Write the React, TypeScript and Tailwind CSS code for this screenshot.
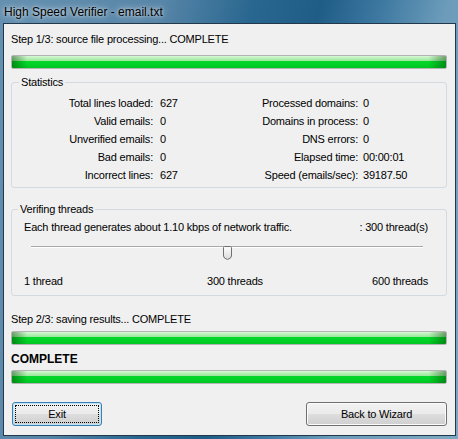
import React from "react";

const leftStats: [string, string][] = [
  ["Total lines loaded:", "627"],
  ["Valid emails:", "0"],
  ["Unverified emails:", "0"],
  ["Bad emails:", "0"],
  ["Incorrect lines:", "627"],
];

const rightStats: [string, string][] = [
  ["Processed domains:", "0"],
  ["Domains in process:", "0"],
  ["DNS errors:", "0"],
  ["Elapsed time:", "00:00:01"],
  ["Speed (emails/sec):", "39187.50"],
];

function ProgressBar({ className = "" }: { className?: string }) {
  return (
    <div
      className={
        "h-[14px] shrink-0 rounded-[2px] border border-[#b4b4b4] bg-[image:linear-gradient(to_right,rgba(0,60,0,0.45)_0%,rgba(0,60,0,0)_3.5%,rgba(0,60,0,0)_96%,rgba(0,60,0,0.45)_100%),linear-gradient(to_bottom,#d8f8d8_0%,#b6f0b6_20%,#9ee99f_38%,#05d62b_42%,#00d227_70%,#00c523_100%)] " +
        className
      }
    />
  );
}

function Thumb() {
  return (
    <svg width="9" height="14" viewBox="0 0 9 14" className="block">
      <defs>
        <linearGradient id="thumbGrad" x1="0" x2="0" y1="0" y2="1">
          <stop offset="0" stopColor="#fefefe" />
          <stop offset="1" stopColor="#dadada" />
        </linearGradient>
      </defs>
      <path
        d="M1.5 0.5 H7.5 A1 1 0 0 1 8.5 1.5 V10 Q8.5 12.3 4.5 13.5 Q0.5 12.3 0.5 10 V1.5 A1 1 0 0 1 1.5 0.5 Z"
        fill="url(#thumbGrad)"
        stroke="#707070"
      />
    </svg>
  );
}

export default function App() {
  return (
    <div className="w-[458px] h-[439px] flex flex-col bg-[linear-gradient(105deg,#6590b0_0%,#5886a8_28%,#2a6790_44%,#1f5c86_56%,#3c77a0_66%,#6c9cba_78%,#7ca8c2_100%)] font-['Liberation_Sans',Arial,sans-serif] text-black overflow-hidden">
      <div className="h-[23px] shrink-0 flex items-center pl-[4px] text-[12px] [text-shadow:0_0_7px_rgba(255,255,255,0.85),0_0_3px_rgba(255,255,255,0.6)]">
        High Speed Verifier - email.txt
      </div>
      <div className="h-[413px] ml-[3px] mr-[2px] border border-[#22394c] bg-[#f0f0f0] pl-[7px] pr-[8px] pt-[8px] pb-[8px] flex flex-col text-[11px] leading-[14px] tracking-[-0.2px]">
        <div>Step 1/3: source file processing... COMPLETE</div>
        <ProgressBar className="mt-[9px]" />

        <fieldset className="mt-[6px] border border-[#d3dbe0] rounded-[3px] pt-[5px] pb-[3px]">
          <legend className="ml-[7px] px-[2px]">Statistics</legend>
          <div className="flex flex-col leading-[18px]">
            {leftStats.map((l, i) => (
              <div key={i} className="flex">
                <div className="w-[141px] text-right">{l[0]}</div>
                <div className="ml-[7px] w-[58px]">{l[1]}</div>
                <div className="w-[140px] text-right">{rightStats[i][0]}</div>
                <div className="ml-[5px]">{rightStats[i][1]}</div>
              </div>
            ))}
          </div>
        </fieldset>

        <fieldset className="mt-[14px] border border-[#d3dbe0] rounded-[3px] pt-[4px] pb-[7px] pl-[12px] pr-[18px]">
          <legend className="-ml-[6px] px-[2px]">Verifing threads</legend>
          <div className="flex justify-between">
            <span>Each thread generates about 1.10 kbps of network traffic.</span>
            <span>: 300 thread(s)</span>
          </div>
          <div className="mt-[12px] h-[14px] ml-[7px] mr-[5px] relative">
            <div className="mt-[5px] h-[2px] border-t border-[#a9a9a9] border-b border-b-white" />
            <div className="absolute left-[192px] top-0">
              <Thumb />
            </div>
          </div>
          <div className="mt-[14px] flex">
            <span className="w-[183px]">1 thread</span>
            <span>300 threads</span>
            <span className="ml-auto">600 threads</span>
          </div>
        </fieldset>

        <div className="mt-[16px]">Step 2/3: saving results... COMPLETE</div>
        <ProgressBar className="mt-[5px]" />
        <div className="mt-[7px] text-[12px] font-bold tracking-normal">COMPLETE</div>
        <ProgressBar className="mt-[4px]" />

        <div className="mt-[18px] flex justify-between">
          <button className="relative ml-[1px] w-[90px] h-[24px] rounded-[3px] border border-[#3c7fb1] bg-[linear-gradient(to_bottom,#f2f2f2_0%,#ebebeb_48%,#dddddd_52%,#cfcfcf_100%)] shadow-[inset_0_0_0_1px_#b9e4f8] flex items-center justify-center text-[11px] tracking-[-0.2px]">
            <span className="absolute inset-[2px] border border-dotted border-black rounded-[1px]" />
            Exit
          </button>
          <button className="w-[141px] h-[24px] rounded-[3px] border border-[#707070] bg-[linear-gradient(to_bottom,#f2f2f2_0%,#ebebeb_48%,#dddddd_52%,#cfcfcf_100%)] shadow-[inset_0_0_0_1px_#fbfbfb] flex items-center justify-center text-[11px] tracking-[-0.2px]">
            Back to Wizard
          </button>
        </div>
      </div>
    </div>
  );
}
